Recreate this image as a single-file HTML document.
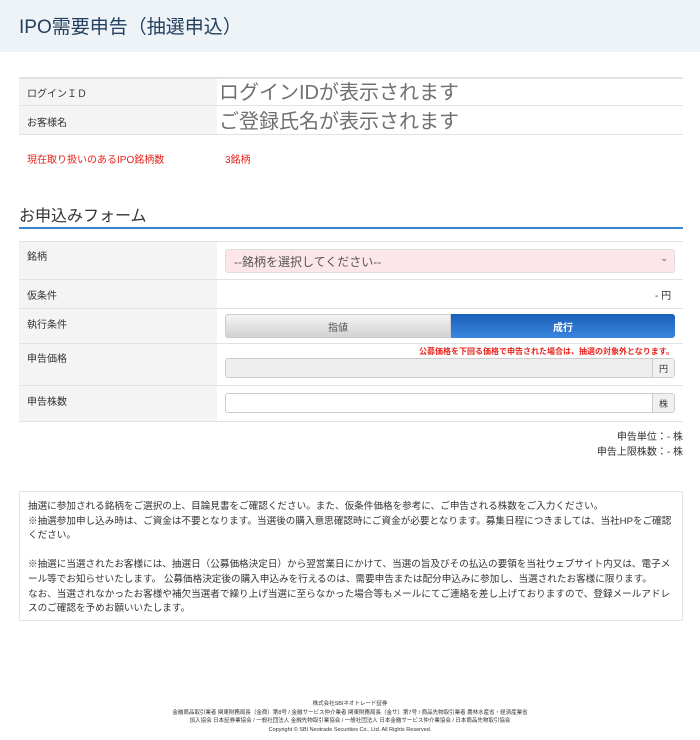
<!DOCTYPE html>
<html><head><meta charset="utf-8"><style>
*{margin:0;padding:0;box-sizing:border-box}
body{width:700px;height:740px;background:#fff;font-family:"Liberation Sans","Noto Sans CJK JP",sans-serif;color:#333;position:relative;overflow:hidden}
.a{position:absolute}
.hdr{left:0;top:0;width:700px;height:52px;background:#eef3f8}
.hdr span{position:absolute;left:19px;top:12px;font-size:19px;color:#24405e}
.lab{background:#f4f4f4;left:19px;width:198px}
.line{left:19px;width:664px;height:1px;background:#e2e2e2}
.sm{font-size:10px;color:#333}
.c{display:flex;align-items:center;justify-content:center}
</style></head><body>
<div class="a hdr"><span>IPO需要申告（抽選申込）</span></div>

<div class="a lab" style="top:77px;height:57px"></div>
<div class="a line" style="top:77px;height:2px"></div>
<div class="a line" style="top:105px"></div>
<div class="a line" style="top:134px"></div>
<div class="a sm" style="left:27px;top:85px">ログインＩＤ</div>
<div class="a sm" style="left:27px;top:114px">お客様名</div>
<div class="a" style="left:219px;top:76px;font-size:20px;color:#707070">ログインIDが表示されます</div>
<div class="a" style="left:219px;top:105px;font-size:20px;color:#707070">ご登録氏名が表示されます</div>
<div class="a" style="left:27px;top:151px;font-size:10px;color:#e8221c">現在取り扱いのあるIPO銘柄数</div>
<div class="a" style="left:225px;top:151px;font-size:10px;color:#e8221c">3銘柄</div>

<div class="a" style="left:19px;top:202px;font-size:16px;color:#333">お申込みフォーム</div>
<div class="a" style="left:19px;top:227px;width:664px;height:2px;background:#3b82d6"></div>

<div class="a lab" style="top:241px;height:180px"></div>
<div class="a line" style="top:241px"></div>
<div class="a line" style="top:279px"></div>
<div class="a line" style="top:308px"></div>
<div class="a line" style="top:343px"></div>
<div class="a line" style="top:385px"></div>
<div class="a line" style="top:421px"></div>
<div class="a sm" style="left:27px;top:248px">銘柄</div>
<div class="a sm" style="left:27px;top:287px">仮条件</div>
<div class="a sm" style="left:27px;top:316px">執行条件</div>
<div class="a sm" style="left:27px;top:350px">申告価格</div>
<div class="a sm" style="left:27px;top:393px">申告株数</div>

<div class="a" style="left:225px;top:249px;width:450px;height:24px;background:#fde6ea;border:1px solid #ddd;border-radius:3px;font-size:12px;color:#555;padding:0 8px;display:flex;align-items:center">--銘柄を選択してください--<span style="position:absolute;right:6px;top:3px;font-size:9px">⌄</span></div>
<div class="a" style="left:655px;top:287px;font-size:10px">- 円</div>
<div class="a c" style="left:225px;top:314px;width:226px;height:24px;background:linear-gradient(#f4f4f4,#d2d2d2);border:1px solid #ccc;border-radius:3px 0 0 3px;font-size:10px;color:#555">指値</div>
<div class="a c" style="left:451px;top:314px;width:224px;height:24px;background:linear-gradient(#1b5fb8,#3a86e0);border-radius:0 3px 3px 0;font-size:10px;color:#fff;font-weight:bold">成行</div>
<div class="a" style="right:26px;top:346px;font-size:8px;color:#e8221c;font-weight:bold">公募価格を下回る価格で申告された場合は、抽選の対象外となります。</div>
<div class="a" style="left:225px;top:358px;width:450px;height:20px;background:#eee;border:1px solid #ccc;border-radius:3px"></div>
<div class="a c" style="left:652px;top:359px;width:22px;height:18px;border-left:1px solid #ccc;background:#f0f0f0;font-size:9px">円</div>
<div class="a" style="left:225px;top:393px;width:450px;height:20px;background:#fff;border:1px solid #ccc;border-radius:3px"></div>
<div class="a c" style="left:652px;top:394px;width:22px;height:18px;border-left:1px solid #ccc;background:#f0f0f0;font-size:9px">株</div>

<div class="a" style="right:17px;top:430px;font-size:10px;text-align:right;line-height:15px">申告単位：- 株<br>申告上限株数：- 株</div>

<div class="a" style="left:19px;top:491px;width:664px;height:130px;border:1px solid #e4e4e4;padding:8px 8px;font-size:9.6px;line-height:14.6px;color:#333">抽選に参加される銘柄をご選択の上、目論見書をご確認ください。また、仮条件価格を参考に、ご申告される株数をご入力ください。<br>※抽選参加申し込み時は、ご資金は不要となります。当選後の購入意思確認時にご資金が必要となります。募集日程につきましては、当社HPをご確認ください。<br><br>※抽選に当選されたお客様には、抽選日（公募価格決定日）から翌営業日にかけて、当選の旨及びその払込の要領を当社ウェブサイト内又は、電子メール等でお知らせいたします。 公募価格決定後の購入申込みを行えるのは、需要申告または配分申込みに参加し、当選されたお客様に限ります。<br>なお、当選されなかったお客様や補欠当選者で繰り上げ当選に至らなかった場合等もメールにてご連絡を差し上げておりますので、登録メールアドレスのご確認を予めお願いいたします。</div>

<div class="a" style="left:0;top:700px;width:700px;text-align:center;font-size:5.5px;line-height:8.5px;color:#333">株式会社SBIネオトレード証券<br>金融商品取引業者 関東財務局長（金商）第8号 / 金融サービス仲介業者 関東財務局長（金サ）第7号 / 商品先物取引業者 農林水産省・経済産業省<br>加入協会 日本証券業協会 / 一般社団法人 金融先物取引業協会 / 一般社団法人 日本金融サービス仲介業協会 / 日本商品先物取引協会<br>Copyright © SBI Neotrade Securities Co., Ltd. All Rights Reserved.</div>
</body></html>
